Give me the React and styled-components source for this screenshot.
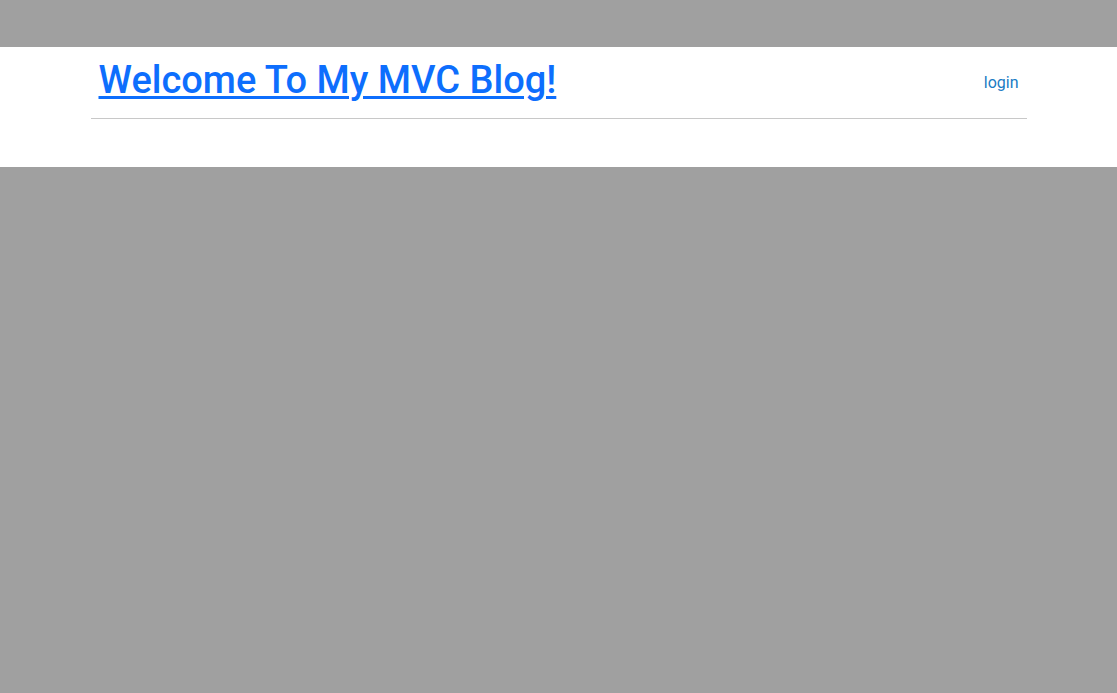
import React from "react";
import styled, { createGlobalStyle } from "styled-components";

const Global = createGlobalStyle`
  html, body { margin: 0; padding: 0; }
  body {
    background: #a0a0a0;
    font-family: Roboto, "Liberation Sans", Arial, sans-serif;
    min-height: 693px;
  }
`;

const Page = styled.div`
  padding-top: 47px;
`;

const Header = styled.header`
  background: #ffffff;
  height: 120px;
`;

const Container = styled.div`
  width: 936px;
  margin: 0 auto;
  padding: 0 12px;
`;

const Bar = styled.div`
  display: flex;
  align-items: center;
  justify-content: space-between;
  height: 71px;
  border-bottom: 1px solid #c8c8c8;
`;

const Title = styled.a`
  font-size: 38px;
  font-weight: 500;
  line-height: 48px;
  padding: 0 8px;
  margin-top: -5px;
  color: #0d6efd;
  text-decoration: underline;
  text-decoration-thickness: 3px;
  text-underline-offset: 3px;
`;

const NavLink = styled.a`
  font-size: 16px;
  color: #1a7bc4;
  text-decoration: none;
  padding: 0 8px;
`;

export default function App() {
  return (
    <Page>
      <Global />
      <Header>
        <Container>
          <Bar>
            <Title href="#">Welcome To My MVC Blog!</Title>
            <NavLink href="#">login</NavLink>
          </Bar>
        </Container>
      </Header>
    </Page>
  );
}
